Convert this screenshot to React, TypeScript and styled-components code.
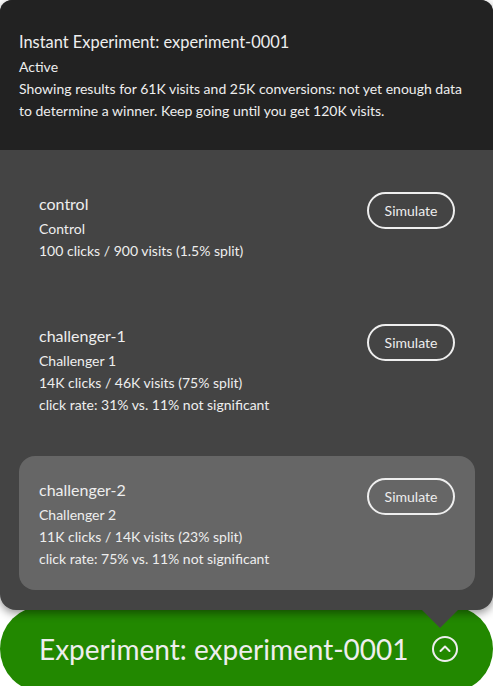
import React from "react";
import styled, { createGlobalStyle } from "styled-components";

const GlobalStyle = createGlobalStyle`
  html, body {
    margin: 0;
    padding: 0;
    background: #ffffff;
    overflow: hidden;
  }
  body {
    font-family: Lato, "Open Sans", sans-serif;
    color: #eeeeee;
  }
`;

const Page = styled.div`
  width: 493px;
  height: 686px;
  display: flex;
  flex-direction: column;
  overflow: hidden;
`;

const Panel = styled.section`
  position: relative;
  z-index: 2;
  border-radius: 12px 12px 16px 16px;
  background: #444444;
  box-shadow: 0 3px 10px rgba(0, 0, 0, 0.45);
`;

const Header = styled.header`
  background: #222222;
  border-radius: 12px 12px 0 0;
  padding: 28px 19px 28px 19px;
`;

const Title = styled.div`
  font-size: 16.4px;
  line-height: 28px;
`;

const Line = styled.div`
  font-size: 14px;
  line-height: 22px;
`;

const Body = styled.div`
  display: flex;
  flex-direction: column;
  gap: 20px;
  padding: 20px 18px 20px 19px;
`;

const Card = styled.div<{ $active?: boolean }>`
  display: flex;
  justify-content: space-between;
  align-items: flex-start;
  padding: 20px;
  border-radius: 16px;
  background: ${(p) => (p.$active ? "#666666" : "transparent")};
`;

const CardTitle = styled.div`
  font-size: 16px;
  line-height: 28px;
`;

const SimButton = styled.button`
  margin-top: 2px;
  width: 88px;
  height: 37px;
  border: 2px solid #eeeeee;
  border-radius: 19px;
  background: transparent;
  color: #eeeeee;
  font-family: inherit;
  font-size: 14px;
  cursor: pointer;
`;

const Arrow = styled.div`
  position: absolute;
  right: 35px;
  bottom: -18px;
  width: 0;
  height: 0;
  border-left: 18px solid transparent;
  border-right: 18px solid transparent;
  border-top: 18px solid #444444;
`;

const Bar = styled.footer`
  margin-top: -4px;
  flex-shrink: 0;
  height: 86px;
  border-radius: 43px;
  background: #228800;
  display: flex;
  align-items: center;
  gap: 22px;
  padding: 0 0 0 39px;
  box-sizing: border-box;
`;

const BarLabel = styled.span`
  font-size: 28px;
  color: #eeeeee;
`;

const variants = [
  {
    id: "control",
    name: "Control",
    stats: "100 clicks / 900 visits (1.5% split)",
  },
  {
    id: "challenger-1",
    name: "Challenger 1",
    stats: "14K clicks / 46K visits (75% split)",
    rate: "click rate: 31% vs. 11% not significant",
  },
  {
    id: "challenger-2",
    name: "Challenger 2",
    stats: "11K clicks / 14K visits (23% split)",
    rate: "click rate: 75% vs. 11% not significant",
    active: true,
  },
];

const ChevronCircle = () => (
  <svg width="28" height="28" viewBox="0 0 28 28" fill="none">
    <circle cx="14" cy="14" r="12" stroke="#eeeeee" strokeWidth="2" />
    <path d="M9.5 16l4.5-4.5 4.5 4.5" stroke="#eeeeee" strokeWidth="2" strokeLinecap="round" strokeLinejoin="round" />
  </svg>
);

export default function App() {
  return (
    <Page>
      <GlobalStyle />
      <Panel>
        <Header>
          <Title>Instant Experiment: experiment-0001</Title>
          <Line>Active</Line>
          <Line>
            Showing results for 61K visits and 25K conversions: not yet enough data to determine a
            winner. Keep going until you get 120K visits.
          </Line>
        </Header>
        <Body>
          {variants.map((v) => (
            <Card key={v.id} $active={v.active}>
              <div>
                <CardTitle>{v.id}</CardTitle>
                <Line>{v.name}</Line>
                <Line>{v.stats}</Line>
                {v.rate && <Line>{v.rate}</Line>}
              </div>
              <SimButton>Simulate</SimButton>
            </Card>
          ))}
        </Body>
        <Arrow />
      </Panel>
      <Bar>
        <BarLabel>Experiment: experiment-0001</BarLabel>
        <ChevronCircle />
      </Bar>
    </Page>
  );
}
